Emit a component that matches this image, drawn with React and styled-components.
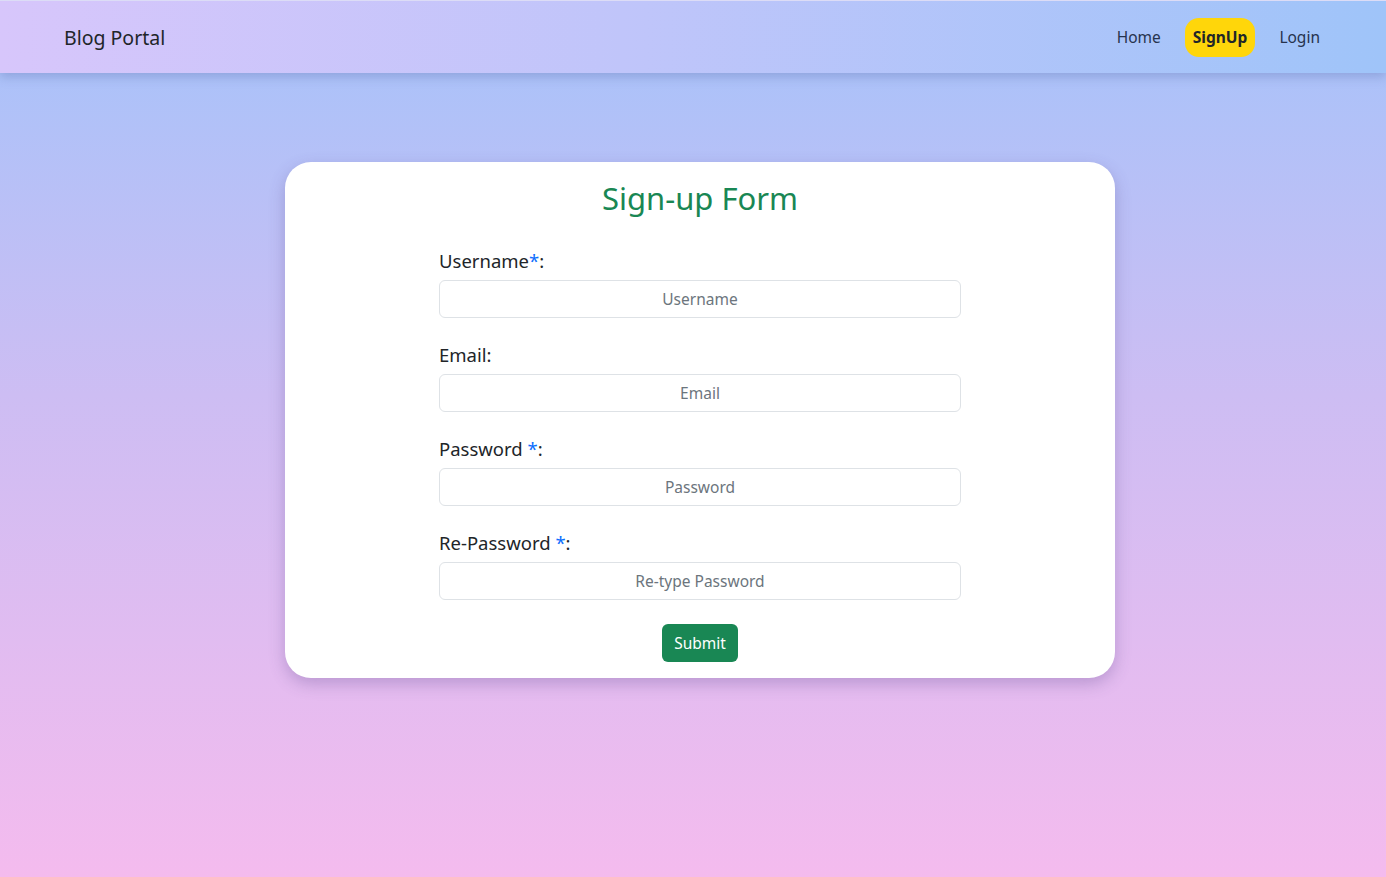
import React from "react";
import styled, { createGlobalStyle } from "styled-components";

const GlobalStyle = createGlobalStyle`
  html, body {
    margin: 0;
    padding: 0;
  }
  body {
    font-family: "Noto Sans", "Open Sans", sans-serif;
    min-height: 877px;
    background: linear-gradient(180deg, #a5c3fa 0%, #cdbdf3 45%, #f4bbee 100%);
  }
  * {
    box-sizing: border-box;
  }
`;

const Page = styled.div`
  min-height: 877px;
  display: flex;
  flex-direction: column;
`;

const NavBar = styled.nav`
  height: 73px;
  display: flex;
  align-items: center;
  justify-content: space-between;
  padding: 0 50px 0 64px;
  background: linear-gradient(90deg, #d7c6fb 0%, #c0c5fa 45%, #9fc4f9 100%);
  border-top: 1px solid #dcdcf6;
  box-shadow: 0 4px 10px rgba(90, 110, 170, 0.35);
`;

const Brand = styled.a`
  font-size: 19.5px;
  color: #212529;
  text-decoration: none;
`;

const NavList = styled.div`
  display: flex;
  align-items: center;
`;

const NavLink = styled.a`
  font-size: 15.5px;
  color: ${(p) => (p.active ? "#212529" : "#26334d")};
  font-weight: ${(p) => (p.active ? 700 : 400)};
  background: ${(p) => (p.active ? "#ffd60a" : "transparent")};
  border-radius: 14px;
  padding: 8px 8px;
  margin: 0 8px;
  text-decoration: none;
  line-height: 23px;
`;

const Main = styled.main`
  display: flex;
  justify-content: center;
  padding: 89px 0 0 14px;
`;

const Card = styled.div`
  width: 830px;
  background: #fff;
  border-radius: 26px;
  box-shadow: 0 6px 16px rgba(90, 70, 140, 0.3);
  padding: 14px 0 16px;
  display: flex;
  flex-direction: column;
  align-items: center;
`;

const Title = styled.h2`
  margin: 0 0 27px;
  font-size: 31px;
  font-weight: 400;
  color: #198754;
  line-height: 44px;
`;

const Form = styled.form`
  width: 522px;
  display: flex;
  flex-direction: column;
`;

const Field = styled.div`
  display: flex;
  flex-direction: column;
  margin-bottom: 23px;
`;

const Label = styled.label`
  font-size: 18.5px;
  color: #212529;
  line-height: 28px;
  margin-bottom: 5px;
`;

const Star = styled.span`
  color: #0d6efd;
`;

const Input = styled.input`
  height: 38px;
  width: 100%;
  border: 1px solid #dee2e6;
  border-radius: 6px;
  text-align: center;
  font-family: inherit;
  font-size: 15.5px;
  color: #212529;
  &::placeholder {
    color: #6c757d;
  }
`;

const Actions = styled.div`
  display: flex;
  justify-content: center;
  padding-top: 1px;
`;

const Button = styled.button`
  height: 38px;
  padding: 0 12px;
  background: #198754;
  color: #fff;
  border: none;
  border-radius: 6px;
  font-family: inherit;
  font-size: 15.5px;
`;

const fields = [
  { label: "Username", star: "*", type: "text", placeholder: "Username" },
  { label: "Email", star: null, type: "email", placeholder: "Email" },
  { label: "Password ", star: "*", type: "password", placeholder: "Password" },
  { label: "Re-Password ", star: "*", type: "password", placeholder: "Re-type Password" },
];

export default function App() {
  return (
    <Page>
      <GlobalStyle />
      <NavBar>
        <Brand href="#">Blog Portal</Brand>
        <NavList>
          <NavLink href="#">Home</NavLink>
          <NavLink href="#" active>
            SignUp
          </NavLink>
          <NavLink href="#">Login</NavLink>
        </NavList>
      </NavBar>
      <Main>
        <Card>
          <Title>Sign-up Form</Title>
          <Form onSubmit={(e) => e.preventDefault()}>
            {fields.map((f) => (
              <Field key={f.placeholder}>
                <Label>
                  {f.label}
                  {f.star && <Star>{f.star}</Star>}:
                </Label>
                <Input type={f.type} placeholder={f.placeholder} />
              </Field>
            ))}
            <Actions>
              <Button type="submit">Submit</Button>
            </Actions>
          </Form>
        </Card>
      </Main>
    </Page>
  );
}
